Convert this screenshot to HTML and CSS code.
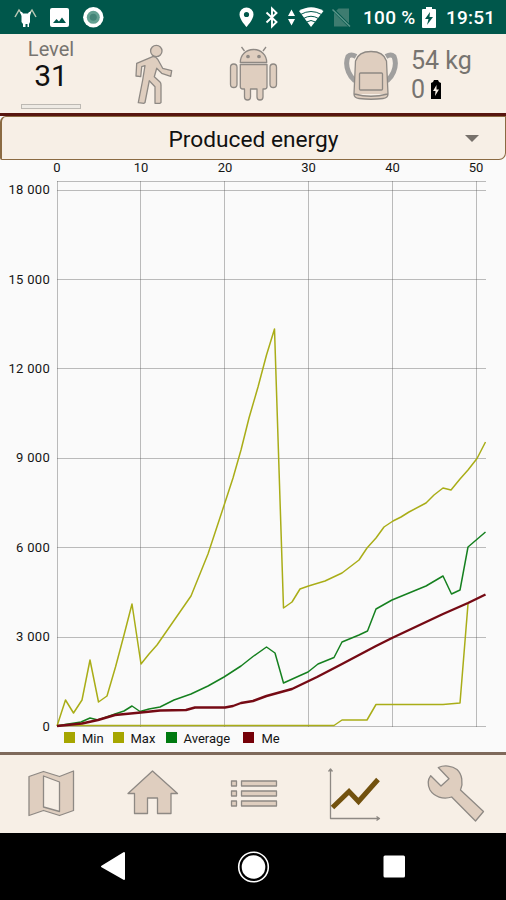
FILE: index.html
```html
<!DOCTYPE html>
<html lang="en">
<head>
    <meta charset="UTF-8">
    <meta name="viewport" content="width=device-width, initial-scale=1.0">
    <title>Produced energy</title>
    <link rel="stylesheet" href="styles.css">
</head>
<body>
    <div class="status-bar">
        <svg class="status-icons" width="120" height="34" viewBox="0 0 120 34">
            <path d="M15 17l4-7 3 4M36 17l-4-7-3 4" fill="none" stroke="#b9c7b4" stroke-width="1.5"/>
            <path d="M20 12h2l1 1.500h5l1-1.500h2l-1 4v6l-1 2v3h-1.500v-3h-2v3H23v-3l-1.500-2v-6z" fill="#fff"/>
            <rect x="50" y="8" width="19" height="19" rx="2" fill="#fff"/>
            <path d="M53 23l3.500-4 2.500 2.500 3-4 4 5.500z" fill="#00574b"/>
            <circle cx="93.300" cy="17.300" r="10.200" fill="#fff"/>
            <circle cx="93.300" cy="17.300" r="6.500" fill="#63a192"/>
            <circle cx="93.300" cy="17.300" r="3.500" fill="#438577"/>
        </svg>
        <svg class="status-icons" width="122" height="34" viewBox="234 0 122 34">
            <path fill-rule="evenodd" d="M246.500 7.500a7 7 0 0 0-7 7c0 5 7 12.500 7 12.500s7-7.500 7-12.500a7 7 0 0 0-7-7zm0 4.400a2.600 2.600 0 1 1 0 5.200 2.600 2.600 0 0 1 0-5.200z" fill="#fff"/>
            <path d="M266.500 12.500l10 9.500-4.500 4.500v-18l4.500 4.500-10 9.500" fill="none" stroke="#fff" stroke-width="1.900"/>
            <path d="M288 16l3.500-6.500L295 16zM288 19l3.500 6.500L295 19z" fill="#fff"/>
            <path d="M299 11q12-7.500 24.500 0L311 27z" fill="#fff"/>
            <path d="M300.500 14.500q10.500-6 21 0M303.500 18.500q7.500-4.500 15 0M306.500 22q4.500-3 9 0" fill="none" stroke="#00574b" stroke-width="1"/>
            <path d="M338.500 8.500H349v18h-15V13z" fill="#3e7c70"/>
            <path d="M332.500 9l18 18" stroke="#00574b" stroke-width="3"/>
            <path d="M332.500 9.500l17.500 17" stroke="#5c958a" stroke-width="1.500"/>
        </svg>
        <span class="percent">100 %</span>
        <svg class="battery" width="14" height="21" viewBox="0 0 14 21">
            <path d="M0 3q0-1 1-1h3V0h6v2h3q1 0 1 1v17q0 1-1 1H1q-1 0-1-1z" fill="#fff"/>
            <path d="M8 5l-5 7h3.500L5 18l6-8H7.500z" fill="#00574b"/>
        </svg>
        <span class="clock">19:51</span>
    </div>

    <div class="header">
        <div class="level">
            <div class="level-label">Level</div>
            <div class="level-value">31</div>
            <div class="level-progress"></div>
        </div>
        <svg class="icon" width="44" height="64" viewBox="132 42 44 64">
            <circle cx="156.300" cy="51" r="5.700"/>
            <path d="M136.700 63.300L152.700 56.700Q156 56.500 157.700 59.300L162.700 68.300 171.700 70.700 170.700 76.300 161.700 73.300 156.700 68.300 154.300 76.700 160 82Q161 83 161 85V102.500L160 103.300H155V86.700L149.300 80.700 145 102.500 144 103.300 138.300 102.700 142.700 80 145 65.700 141.700 66.700 140.700 76.700 136 76z"/>
        </svg>
        <svg class="icon" width="52" height="62" viewBox="228 42 52 62">
            <path d="M244.500 51l-3-4M263 51l3-4" fill="none"/>
            <path d="M240.300 62.500c0-7.500 5.500-13 13.200-13s13.200 5.500 13.200 13z"/>
            <circle cx="248" cy="56.500" r="1.200" class="dark"/>
            <circle cx="259" cy="56.500" r="1.200" class="dark"/>
            <path d="M240.300 64.500h26.700v22q0 2.500-2.500 2.500H263v8q0 3-3 3t-3-3v-8h-6.500v8q0 3-3 3t-3-3v-8h-1.700q-2.500 0-2.500-2.500z"/>
            <rect x="230.500" y="64" width="6.500" height="23.500" rx="3.250"/>
            <rect x="270" y="64" width="6.500" height="23.500" rx="3.250"/>
        </svg>
        <svg class="icon backpack" width="56" height="54" viewBox="343 48 56 54">
            <path class="strap" d="M356 56.500q-5-3-8 0-3 7 .5 15.500 2 5 6.500 9M386 56.500q5-3 8 0 3 7-.5 15.500-2 5-6.500 9"/>
            <path d="M354 94l1.500-33q3-9.500 15.500-9.500t15.500 9.500l1.500 33q0 4-5 4.500-12 1.500-24 0-5-.5-5-4.500zM354.500 94q16.500 4.500 33 0"/>
            <rect x="359.500" y="73" width="23" height="17" rx="1"/>
        </svg>
        <div class="load">
            <div>54 kg</div>
            <div class="cells">0
                <svg width="10" height="19" viewBox="0 0 10 19">
                    <path d="M0 3l2-1 1-2h4l1 2 2 1v16H0z" fill="#000"/>
                    <path d="M5.500 5L2 11h2.500l-.5 5 4-6.500H5.500z" fill="#f7efe6"/>
                </svg>
            </div>
        </div>
    </div>

    <div class="spinner-row">
        <div class="spinner">
            <span>Produced energy</span>
            <i class="arrow"></i>
        </div>
    </div>

    <svg class="chart" width="506" height="592" viewBox="0 160 506 592">
        <path class="grid" d="M57.500 181v546M140.500 181v546M224.500 181v546M308.500 181v546M392.500 181v546M476.500 181v546"/>
        <path class="grid" d="M57 181.500h429M57 190.500h429M57 279.500h429M57 368.500h429M57 458.500h429M57 547.500h429M57 637.500h429M57 726.500h429"/>

        <g class="x-labels">
            <text x="57" y="172">0</text>
            <text x="141" y="172">10</text>
            <text x="225" y="172">20</text>
            <text x="308.500" y="172">30</text>
            <text x="392.500" y="172">40</text>
            <text x="476" y="172">50</text>
        </g>
        <g class="y-labels">
            <text x="50" y="194">18 000</text>
            <text x="50" y="283.500">15 000</text>
            <text x="50" y="373">12 000</text>
            <text x="50" y="462">9 000</text>
            <text x="50" y="551.500">6 000</text>
            <text x="50" y="641">3 000</text>
            <text x="50" y="730.500">0</text>
        </g>

        <polyline class="line olive" points="57,725.500 334,725.500 342,720 367,720 376,704.500 443,704.500 460,703 468,604"/>
        <polyline class="line olive" points="57,726 65.500,700 73.500,713 82,700 90,660 98.500,702 107,696 115.500,667 124,635 132,604 141,664 149,654 157,645 191,596 208,554 224.500,504 233,478 241,450 249,418 258,387 266.500,355 274.500,329 283.500,608 292,602 300,589 308.500,586 325,581 342,573 359,560 367,548 376,538 384,527 393,521 401,517 409,512 426,503 434,495 443,488 451,490 460,479 468,470 477,458.500 485.500,442"/>
        <polyline class="line green" points="57,726 65,724.500 81,722 90,718 98,720 115,714 124,711 132,706 140,711.500 149,709 160,707 174,700 191,694 208,686 224,677 241,666 253,656.500 266.500,647 275,653 283.500,683 299,676 308,672 318,664 334,657.500 342,642 359,635 367.500,631 376,609 392,600 426,586 443,576 451.500,594 460,590 468,547 485.500,532"/>
        <polyline class="line me" points="57,726 82,723.500 98,720 115,715 141,712.500 160,710.500 186,710 195,707.500 225,707.500 233,706 241,703 253,701 266.500,696 292,689 317,677 342,664 376,646 392,638 443,614 468,603 485.500,594.500"/>

        <g class="legend">
            <rect x="64" y="732" width="11" height="11" fill="#a6a600"/>
            <text x="82" y="742.500">Min</text>
            <rect x="113" y="732" width="11" height="11" fill="#a6a600"/>
            <text x="130.500" y="742.500">Max</text>
            <rect x="166" y="732" width="11" height="11" fill="#007a10"/>
            <text x="183.500" y="742.500">Average</text>
            <rect x="243" y="732" width="11" height="11" fill="#750008"/>
            <text x="261.500" y="742.500">Me</text>
        </g>
    </svg>

    <div class="tabs">
        <svg class="icon" viewBox="0 755 101 78">
            <path fill-rule="evenodd" d="M29 776.500l14.500-5 16 5L73.500 771v39.500L59.500 815.500l-16-5-14.500 5zM43.500 776v31l16 4.500V782z"/>
        </svg>
        <svg class="icon" viewBox="101 755 101 78">
            <path d="M152.500 771l25 22.500H171v20h-13.500V798h-10v15.500h-13v-20H128z"/>
        </svg>
        <svg class="icon" viewBox="202 755 101 78">
            <path d="M231.500 781h5v5h-5zM231.500 791h5v5h-5zM231.500 801h5v5h-5zM241.500 781h35v5h-35zM241.500 791h35v5h-35zM241.500 801h35v5h-35z"/>
        </svg>
        <svg class="icon" viewBox="303 755 101 78">
            <path class="axis" d="M330.500 770v48.500H379M328.500 771.500l2-2.500 2 2.500M376.500 816.500l3 2-3 2"/>
            <path class="trend" d="M332.500 807.500l16.500-16 9.500 10L378 779.500"/>
        </svg>
        <svg class="icon" viewBox="404 755 102 78">
            <path d="M438.300 767.500C444 765 452 765.500 457 769.500 462 774 463.500 783 460.500 790L483.500 811.500 475.500 821 451.700 797C443 800 434 796.500 430 790 427.500 785 427.500 780 430.700 775.700L441 786 449 778.700z"/>
        </svg>
    </div>

    <div class="nav-bar">
        <svg width="506" height="67" viewBox="0 833 506 67">
            <path d="M102 866.500l22-13.500v26z" fill="#fff" stroke="#fff" stroke-width="2" stroke-linejoin="round"/>
            <circle cx="253.500" cy="867" r="14.800" fill="none" stroke="#fff" stroke-width="1.600"/>
            <circle cx="253.500" cy="867" r="11.800" fill="#fff"/>
            <rect x="383.500" y="855.500" width="21.500" height="22" rx="1.500" fill="#fff"/>
        </svg>
    </div>
</body>
</html>
```

FILE: styles.css
```css
* {
    box-sizing: border-box;
}
body {
    margin: 0;
    width: 506px;
    height: 900px;
    overflow: hidden;
    background: #fafafa;
    font-family: Roboto, sans-serif;
}
svg {
    display: block;
    flex: none;
}
.status-bar {
    display: flex;
    align-items: center;
    height: 34px;
    background: #00574b;
    color: #fff;
    font-size: 19px;
    font-weight: 500;
    line-height: 34px;
    white-space: nowrap;
}
.status-icons + .status-icons {
    margin-left: 114px;
}
.percent {
    width: 59px;
    margin-left: 7px;
    padding-top: 2px;
    letter-spacing: 0.3px;
}
.battery {
    margin-top: 1px;
    margin-right: 10px;
}
.clock {
    padding-top: 2px;
    letter-spacing: 0.2px;
}
.header {
    display: flex;
    align-items: flex-start;
    height: 79px;
    padding-left: 21px;
    background: #f7efe6;
}
.level {
    width: 60px;
    margin-right: 51px;
    padding-top: 3px;
    text-align: center;
}
.level-label {
    color: #777470;
    font-size: 20px;
    line-height: 24px;
}
.level-value {
    color: #111;
    font-size: 30px;
    line-height: 30px;
}
.level-progress {
    height: 5px;
    margin-top: 13px;
    border: 1px solid #bdb9b3;
    background: #eeeae4;
}
.header .icon {
    margin-top: 8px;
}
.header .icon + .icon {
    margin-left: 52px;
}
.header .icon + .backpack {
    margin-top: 14px;
    margin-left: 63px;
}
.load {
    margin-left: 12px;
    padding-top: 12px;
    color: #777470;
    font-size: 25px;
    line-height: 29px;
    white-space: nowrap;
}
.cells {
    display: flex;
    align-items: center;
    gap: 6px;
}
.icon {
    fill: #dfcebf;
    stroke: #8e8984;
    stroke-width: 1.3;
    stroke-linejoin: round;
}
.icon .dark {
    fill: #8e8984;
}
.icon .strap {
    fill: none;
    stroke: #a09f9e;
    stroke-width: 5;
}
.spinner-row {
    height: 47px;
    border-top: 3px solid #57150f;
}
.spinner {
    display: flex;
    align-items: center;
    justify-content: center;
    position: relative;
    height: 44px;
    padding-top: 2px;
    border: 1px solid #8b6a42;
    border-left-width: 2px;
    border-radius: 6px 0 7px 2px;
    background: #f7efe6;
    color: #111;
    font-size: 22.7px;
}
.arrow {
    position: absolute;
    top: 18px;
    right: 26px;
    border: 7px solid transparent;
    border-top-color: #77716b;
    border-bottom: 0;
}
.chart {
    font-family: Roboto, sans-serif;
    font-size: 13px;
    fill: #151515;
}
.grid {
    fill: none;
    stroke: rgba(90, 90, 90, 0.4);
    stroke-width: 1;
}
.x-labels {
    text-anchor: middle;
}
.y-labels {
    text-anchor: end;
    letter-spacing: 0.3px;
}
.line {
    fill: none;
    stroke-width: 1.5;
    stroke-linejoin: round;
}
.olive {
    stroke: #a9ad17;
}
.green {
    stroke: #15801f;
}
.me {
    stroke: #750a14;
    stroke-width: 2.4;
}
.tabs {
    display: grid;
    grid-template-columns: 101px 101px 101px 101px 102px;
    height: 81px;
    border-top: 3px solid #7f6a5b;
    background: #f7efe6;
}
.tabs .icon {
    width: 100%;
    height: 78px;
}
.icon .axis {
    fill: none;
}
.icon .trend {
    fill: none;
    stroke: #72510e;
    stroke-width: 5;
    stroke-linejoin: miter;
}
.nav-bar {
    height: 67px;
    background: #000;
}
```
